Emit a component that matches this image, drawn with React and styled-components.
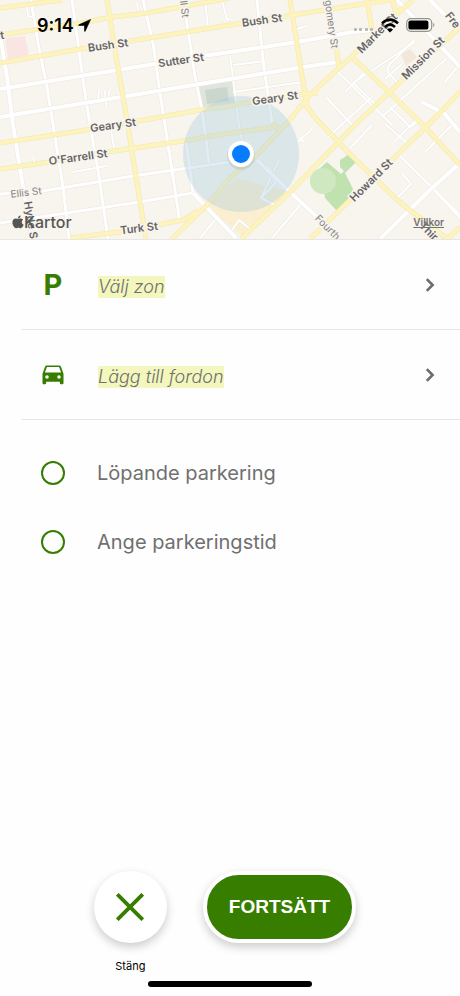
import { useState } from 'react';
import styled, { createGlobalStyle } from 'styled-components';

const GlobalStyle = createGlobalStyle`
    * {
        box-sizing: border-box;
    }

    body {
        margin: 0;
        background-color: #fefefe;
        font-family: 'Inter', 'Liberation Sans', sans-serif;
    }

    button {
        font-family: inherit;
        border: none;
        padding: 0;
        cursor: pointer;
    }
`;

const Screen = styled.div`
    display: flex;
    flex-direction: column;
    min-height: 100vh;
`;

const MapHeader = styled.header`
    display: grid;
    height: 240px;
    overflow: hidden;
    border-bottom: 1px solid #e6e6e6;

    > * {
        grid-area: 1 / 1;
        min-width: 0;
    }
`;

const MapSvg = styled.svg`
    display: block;
    width: 100%;
    height: 239px;
    background-color: #f8f4ee;
`;

const Road = styled.path`
    fill: none;
    stroke: ${props => props.$color || '#ffffff'};
    stroke-width: ${props => props.$width || 2};
    stroke-linejoin: round;
`;

const StreetName = styled.text`
    font-family: 'Inter', sans-serif;
    font-size: ${props => (props.$minor ? '10px' : '11px')};
    font-weight: ${props => (props.$minor ? 400 : 600)};
    fill: ${props => (props.$minor ? '#858585' : '#656565')};
    stroke: #f8f4ee;
    stroke-width: 3px;
    paint-order: stroke;
    text-anchor: middle;
    dominant-baseline: central;
`;

const MapOverlay = styled.div`
    display: flex;
    flex-direction: column;
    justify-content: space-between;
    z-index: 1;
`;

const StatusBar = styled.div`
    display: flex;
    justify-content: space-between;
    align-items: center;
    padding: 12px 25px 0 37px;
    height: 38px;
`;

const StatusGroup = styled.div`
    display: flex;
    align-items: center;
    gap: ${props => props.$gap || '4px'};
`;

const Clock = styled.span`
    font-size: 18px;
    font-weight: 600;
    color: #000;
`;

const MapCredits = styled.div`
    display: flex;
    justify-content: space-between;
    align-items: center;
    padding: 0 16px 7px 12px;
`;

const MapBrand = styled.span`
    display: flex;
    align-items: center;
    font-size: 16px;
    font-weight: 500;
    color: #565656;
`;

const TermsLink = styled.a`
    font-size: 10px;
    font-weight: 600;
    color: #737373;
`;

const Main = styled.main`
    flex: 1;
`;

const SelectRow = styled.button`
    display: grid;
    grid-template-columns: 76px 1fr 24px;
    align-items: center;
    width: calc(100% - 22px);
    height: 90px;
    margin-left: 22px;
    padding-right: 18px;
    background: none;
    border-bottom: 1px solid #e6e6e6;
    text-align: left;
`;

const RowIcon = styled.span`
    display: flex;
    justify-content: center;
    width: 62px;
    color: #377d00;
`;

const ParkingLetter = styled.span`
    font-size: 29px;
    line-height: 32px;
    font-weight: 700;
`;

const Placeholder = styled.span`
    justify-self: start;
    margin-top: 4px;
    background-color: #f3f7bd;
    color: #6f6f6f;
    font-size: 18px;
    line-height: 22px;
    font-style: italic;
    font-weight: 300;
`;

const Options = styled.fieldset`
    margin: 0;
    padding: 18px 0 0 22px;
    border: none;
`;

const Option = styled.label`
    display: grid;
    grid-template-columns: 75px 1fr;
    align-items: center;
    height: 69px;
    font-size: 20px;
    color: #707070;
`;

const Radio = styled.input`
    appearance: none;
    width: 24px;
    height: 24px;
    margin: 0 0 0 19px;
    border: 2px solid #377d00;
    border-radius: 50%;

    &:checked {
        background: radial-gradient(#377d00 0 6px, transparent 7px);
    }
`;

const Footer = styled.footer`
    display: flex;
    flex-direction: column;
    align-items: center;
    padding-bottom: 9px;
`;

const Actions = styled.div`
    display: flex;
    align-items: flex-start;
    gap: 36px;
    padding-right: 10px;
`;

const CloseAction = styled.div`
    display: flex;
    flex-direction: column;
    align-items: center;
    gap: 16px;
    font-size: 11px;
    line-height: 14px;
    color: #000;
`;

const RoundButton = styled.button`
    display: flex;
    justify-content: center;
    align-items: center;
    width: 73px;
    height: 72px;
    border-radius: 36px;
    background-color: #fff;
    color: #377d00;
    box-shadow: 0 4px 10px rgba(0, 0, 0, 0.2);
`;

const ContinueButton = styled.button`
    && {
        border: 4px solid #fff;
        padding: 0 22px;
    }
    height: 72px;
    border-radius: 36px;
    background-color: #377d00;
    color: #fff;
    font-family: 'Liberation Sans', sans-serif;
    font-size: 19px;
    font-weight: 700;
    box-shadow: 0 4px 10px rgba(0, 0, 0, 0.2);
`;

const HomeIndicator = styled.div`
    width: 164px;
    height: 6px;
    margin-top: 8px;
    border-radius: 3px;
    background-color: #000;
`;

const alleys = [
    'M27 6 L28 16 L32 17', 'M98 98 L99 90 M106 106 L105 91 M108 98 L110 89',
    'M137 3 L138 10 M205 0 L208 28 M222 0 L227 20 L230 19',
    'M73 172 L106 166', 'M111 130 L114 148', 'M33 156 L35 166',
    'M233 65 L265 61', 'M233 92 L303 82', 'M230 55 L239 125 L242 141',
    'M294 30 L307 26', 'M327 98 L333 105', 'M353 83 L415 42', 'M385 79 L402 64',
    'M414 40 L390 64 Q385 70 390 75 L397 82', 'M447 58 L383 116', 'M445 82 L460 64',
    'M338 72 L392 125', 'M353 83 L378 107', 'M364 73 L345 92 M372 97 L327 138',
    'M327 98 L352 125', 'M372 125 L350 148', 'M390 107 L410 127 L420 120',
    'M298 142 L313 128 M300 138 L304 142', 'M385 124 L407 143 M394 142 L416 120',
    'M425 152 L452 125 M436 138 L441 144', 'M397 153 L460 215',
    'M402 173 L411 184 L395 200', 'M279 160 L261 198 L275 205 M261 198 L278 180',
    'M268 166 L272 171', 'M232 230 L239 220 L250 229', 'M272 238 L301 204',
    'M216 219 L200 238', 'M432 188 L460 218',
];

const whiteThin = [
    'M0 194 L43 191 L133 176 L230 162', 'M0 223 L133 203 L193 193',
    'M31 0 L38 43 L47 87 L55 137 L63 187 L69 239',
    'M72 0 L78 43 L83 80 L90 125 L98 170 L108 239',
    'M143 0 L153 43 L160 93 L165 125 L172 170 L180 223',
    'M183 0 L188 30 L195 77 L202 110 L209 163', 'M186 141 L193 192',
    'M257 0 L263 60 L272 123', 'M323 0 L337 47',
];

const whiteWide = [
    'M0 89 L118 70 L203 56 L230 52 L297 42 L353 32 L374 30',
    'M0 117 L230 79 L297 68 L338 62',
    'M0 35 L7 77 L13 125 L25 200 L32 239',
    'M257 160 L290 192 L340 238', 'M193 193 L236 238',
    'M380 239 L432 188 L460 163', 'M397 0 L460 67', 'M430 0 L460 30',
    'M422 102 L445 114 L460 132',
];

const yellowRoads = [
    'M0 8 L62 0', 'M0 35 L80 23 L113 17 L147 13 L230 -2',
    'M0 63 L80 49 L130 41 L230 25 L293 15 L363 4 L390 0',
    'M0 143 L80 131 L133 122 L200 110 L230 106 L250 102 L297 95 L318 93',
    'M0 169 L50 162 L107 152 L183 141 L230 133 L277 127',
    'M70 238 L120 232 L157 225 L183 220 L198 211',
    'M107 0 L115 50 L127 120 L137 183 L146 239',
    'M290 0 L298 50 L307 107 L317 120 L353 157 L397 200 L447 239',
    'M336 44 L339 70', 'M367 0 L372 30', 'M392 0 L396 13 L403 8', 'M272 123 L281 130',
    'M413 0 L383 27 L340 67 L310 95 L287 123 L257 155 L230 178 L207 205 L172 239',
    'M460 27 L397 85 L355 125 L290 192 L241 239',
    'M310 239 L350 200 L397 155 L430 123 L460 92',
    'M353 58 L390 93 L423 125 L460 165', 'M447 239 L460 227',
];

const streetNames = [
    { name: 'Bush St', x: 108, y: 45, angle: -8 },
    { name: 'Bush St', x: 262, y: 20, angle: -8 },
    { name: 'Sutter St', x: 181, y: 60, angle: -8 },
    { name: 'Geary St', x: 275, y: 98, angle: -8 },
    { name: 'Geary St', x: 113, y: 125, angle: -8 },
    { name: "O'Farrell St", x: 78, y: 157, angle: -8 },
    { name: 'Turk St', x: 139, y: 228, angle: -7 },
    { name: 'Ellis St', x: 26, y: 192, angle: -7, minor: true },
    { name: 'Hyde S', x: 31, y: 220, angle: 81 },
    { name: 'll St', x: 185, y: 9, angle: 83, minor: true },
    { name: 'gomery St', x: 332, y: 24, angle: 82, minor: true },
    { name: 'Market St', x: 377, y: 33, angle: -45 },
    { name: 'Mission St', x: 423, y: 58, angle: -45 },
    { name: 'Howard St', x: 371, y: 180, angle: -45 },
    { name: 'Fourth', x: 328, y: 227, angle: 45, minor: true },
    { name: 'Thir', x: 429, y: 231, angle: 45 },
    { name: 'Fre', x: 453, y: 20, angle: 52 },
    { name: 't', x: 2, y: 35, angle: -8 },
];

const StreetMap = () => (
    <MapSvg viewBox="0 0 460 239" preserveAspectRatio="xMidYMid slice" role="img" aria-label="Karta">
        <path d="M5 38 L25 36 L29 55 L8 59 Z" fill="#f9e6e3" />
        <path d="M199 86 L232 81 L236 104 L202 110 Z" fill="#dfe5dc" />
        <path d="M205 90 L227 87 L229 101 L207 104 Z" fill="#cbd6cc" />
        <path d="M401 54 L410 49 L417 57 L406 66 Z" fill="#f1e8da" />
        <path d="M207 207 L236 178 L290 192 L244 238 Z" fill="#faefd0" />
        <path d="M327 162 L341 174 L344 171 L340 167 L340 160 L348 155 L356 162 L345 173 L353 189 L350 199 L337 211 L325 198 Q326 192 318 191 Q315 180 310 177 Z" fill="#bfe2ae" />
        <circle cx="323" cy="181" r="13" fill="#cfe8c0" />
        {alleys.map(d => <Road key={d} d={d} $color="#ebe7e1" $width={3} />)}
        {whiteThin.map(d => <Road key={d} d={d} $color="#ebe7e1" $width={4} />)}
        {alleys.map(d => <Road key={d} d={d} />)}
        {whiteThin.map(d => <Road key={d} d={d} $width={3} />)}
        {whiteWide.map(d => <Road key={d} d={d} $color="#ebe7e1" $width={5} />)}
        {whiteWide.map(d => <Road key={d} d={d} $width={4} />)}
        {yellowRoads.map(d => <Road key={d} d={d} $color="#f3e6b8" $width={5} />)}
        {yellowRoads.map(d => <Road key={d} d={d} $color="#fdf3bd" $width={4} />)}
        <circle cx="241" cy="154" r="58" fill="#a5c9df" fillOpacity="0.34" />
        {streetNames.map(street => (
            <StreetName
                key={`${street.name}${street.x}`}
                $minor={street.minor}
                transform={`translate(${street.x} ${street.y}) rotate(${street.angle})`}
            >
                {street.name}
            </StreetName>
        ))}
        <circle cx="241" cy="156" r="14" fill="#5b7180" fillOpacity="0.15" />
        <circle cx="241" cy="154" r="13" fill="#fff" />
        <circle cx="241" cy="154" r="9" fill="#087cff" />
    </MapSvg>
);

const LocationIcon = () => (
    <svg width="13" height="13" viewBox="0 0 13 13" aria-hidden="true">
        <path d="M12.6 0.4 L7.2 12.2 Q6.7 12.8 6.5 12 V6.5 H1 Q0.2 6.3 0.8 5.8 Z" fill="#000" stroke="#000" strokeWidth="0.6" />
    </svg>
);

const SignalIcon = () => (
    <svg width="20" height="12" viewBox="0 0 20 12" aria-hidden="true" fill="#b9b7b4">
        <rect x="0" y="9" width="3" height="3" rx="1" />
        <rect x="5" y="9" width="3" height="3" rx="1" />
        <rect x="11" y="9" width="3" height="3" rx="1" />
        <rect x="16" y="9" width="3" height="3" rx="1" />
    </svg>
);

const WifiIcon = () => (
    <svg width="18" height="15" viewBox="0 0 18 15" aria-hidden="true" fill="none" stroke="#000" strokeWidth="2.6">
        <path d="M1 5.4 Q9 -2 17 5.4" />
        <path d="M4 9 Q9 4.2 14 9" />
        <path d="M9 14.6 L6 11.6 Q9 9 12 11.6 Z" fill="#000" stroke="none" />
    </svg>
);

const BatteryIcon = () => (
    <svg width="29" height="14" viewBox="0 0 29 14" aria-hidden="true">
        <rect x="0.7" y="0.7" width="25" height="12.6" rx="4" fill="#fbf8f3" stroke="#96938f" strokeWidth="1.2" />
        <rect x="2.4" y="2.4" width="20" height="9.2" rx="2.2" fill="#000" />
        <path d="M27.2 4.8 Q29.6 7 27.2 9.2 Z" fill="#96938f" />
    </svg>
);

const AppleIcon = () => (
    <svg width="12" height="14" viewBox="0 0 12 14" aria-hidden="true" fill="#565656">
        <path d="M8.6 0.4 Q8.7 1.8 7.8 2.7 Q7 3.5 6 3.4 Q5.9 2.2 6.8 1.3 Q7.5 0.6 8.6 0.4 Z" />
        <path d="M6.1 4.1 C6.8 4.1 7.5 3.5 8.7 3.5 C9.8 3.5 10.7 4.1 11.2 4.8 C9.1 6.1 9.4 8.9 11.7 9.8 C11.2 11.2 10 13.2 8.7 13.2 C7.8 13.2 7.4 12.7 6.3 12.7 C5.2 12.7 4.8 13.2 4 13.2 C2.3 13.2 0.4 10.1 0.4 7.6 C0.4 5.2 1.9 3.6 3.7 3.6 C4.7 3.6 5.5 4.1 6.1 4.1 Z" />
    </svg>
);

const CarIcon = () => (
    <svg width="22" height="20" viewBox="0 0 22 20" aria-hidden="true">
        <path
            fillRule="evenodd"
            fill="currentColor"
            d="M4.8 0.5 H17.2 Q18.5 0.5 19 1.8 L21.5 8.8 V18 Q21.5 19.2 20.4 19.2 H19 Q17.9 19.2 17.9 18 V16.8 H4.1 V18 Q4.1 19.2 3 19.2 H1.6 Q0.5 19.2 0.5 18 V8.8 L3 1.8 Q3.5 0.5 4.8 0.5 Z M4.9 2.1 L2.9 7.6 H19.1 L17.1 2.1 Z M5 10.2 A1.8 1.8 0 1 0 5 13.8 A1.8 1.8 0 1 0 5 10.2 Z M17 10.2 A1.8 1.8 0 1 0 17 13.8 A1.8 1.8 0 1 0 17 10.2 Z"
        />
    </svg>
);

const ChevronIcon = () => (
    <svg width="24" height="24" viewBox="0 0 24 24" aria-hidden="true" fill="none" stroke="#6c6c6c" strokeWidth="2.6">
        <path d="M8.8 6.2 L14.6 12 L8.8 17.8" />
    </svg>
);

const CloseIcon = () => (
    <svg width="28" height="28" viewBox="0 0 28 28" aria-hidden="true" stroke="currentColor" strokeWidth="3.8">
        <path d="M1.3 1.3 L26.7 26.7 M26.7 1.3 L1.3 26.7" />
    </svg>
);

const selectRows = [
    { label: 'Välj zon', icon: <ParkingLetter>P</ParkingLetter> },
    { label: 'Lägg till fordon', icon: <CarIcon /> },
];

const parkingOptions = [
    { value: 'running', label: 'Löpande parkering' },
    { value: 'timed', label: 'Ange parkeringstid' },
];

const App = () => {
    const [parkingType, setParkingType] = useState(null);

    return (
        <Screen>
            <GlobalStyle />
            <MapHeader>
                <StreetMap />
                <MapOverlay>
                    <StatusBar>
                        <StatusGroup>
                            <Clock>9:14</Clock>
                            <LocationIcon />
                        </StatusGroup>
                        <StatusGroup $gap="7px">
                            <SignalIcon />
                            <WifiIcon />
                            <BatteryIcon />
                        </StatusGroup>
                    </StatusBar>
                    <MapCredits>
                        <MapBrand><AppleIcon />Kartor</MapBrand>
                        <TermsLink href="#villkor">Villkor</TermsLink>
                    </MapCredits>
                </MapOverlay>
            </MapHeader>
            <Main>
                {selectRows.map(row => (
                    <SelectRow key={row.label} type="button">
                        <RowIcon>{row.icon}</RowIcon>
                        <Placeholder>{row.label}</Placeholder>
                        <ChevronIcon />
                    </SelectRow>
                ))}
                <Options aria-label="Parkeringstyp">
                    {parkingOptions.map(option => (
                        <Option key={option.value}>
                            <Radio
                                type="radio"
                                name="parkingType"
                                value={option.value}
                                checked={parkingType === option.value}
                                onChange={() => setParkingType(option.value)}
                            />
                            {option.label}
                        </Option>
                    ))}
                </Options>
            </Main>
            <Footer>
                <Actions>
                    <CloseAction>
                        <RoundButton type="button" aria-labelledby="close-label">
                            <CloseIcon />
                        </RoundButton>
                        <span id="close-label">Stäng</span>
                    </CloseAction>
                    <ContinueButton type="button">FORTSÄTT</ContinueButton>
                </Actions>
                <HomeIndicator />
            </Footer>
        </Screen>
    );
};

export default App;
